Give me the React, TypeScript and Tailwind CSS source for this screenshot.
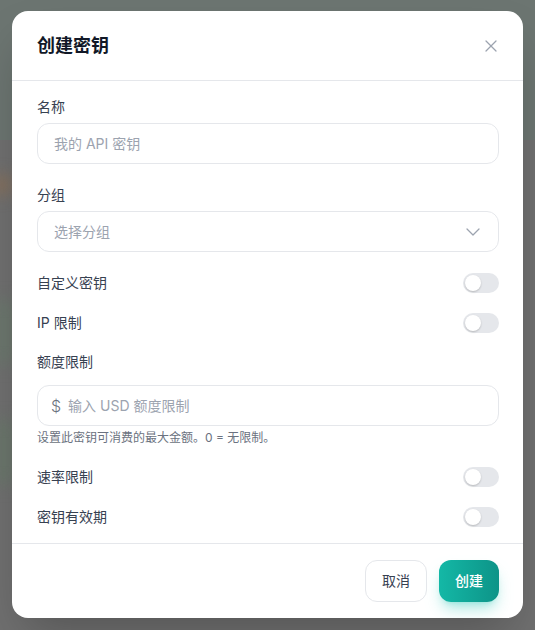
import { X, ChevronDown } from "lucide-react";

function Toggle() {
  return (
    <span className="relative inline-flex h-5 w-9 shrink-0 items-center rounded-full bg-[#e5e7eb]">
      <span className="ml-0.5 h-4 w-4 rounded-full bg-white shadow-[0_1px_2px_rgba(0,0,0,0.2)]" />
    </span>
  );
}

function ToggleRow({ label }: { label: string }) {
  return (
    <div className="flex h-5 items-center justify-between">
      <span className="text-sm text-[#374151]">{label}</span>
      <Toggle />
    </div>
  );
}

export default function App() {
  return (
    <div
      className="relative flex h-[630px] w-[535px] overflow-hidden bg-[#707070] px-3 pt-[11px]"
      style={{ fontFamily: 'Inter, "Noto Sans CJK SC", sans-serif' }}
    >
      {/* blurred page behind the dialog */}
      <div className="pointer-events-none absolute inset-0">
        <div className="absolute left-0 top-0 h-[140px] w-full bg-[#6c7571]" />
        <div className="absolute -left-2 top-[175px] h-5 w-5 rounded-full bg-[#8a7058] blur-sm" />
        <div className="absolute -left-2 top-[300px] h-16 w-6 bg-[#6b776d] blur-sm" />
        <div className="absolute -left-2 top-[420px] h-16 w-6 bg-[#6a766b] blur-sm" />
      </div>

      <div className="relative flex h-[607px] w-[511px] flex-col overflow-hidden rounded-2xl bg-white shadow-2xl">
        {/* header */}
        <div className="flex items-center justify-between border-b border-[#e5e7eb] pb-5 pl-[25px] pr-[22px] pt-[21px]">
          <h2 className="text-lg font-bold leading-7 text-[#111827]">创建密钥</h2>
          <X className="h-5 w-5 text-[#9ca3af]" strokeWidth={1.5} />
        </div>

        {/* body */}
        <div className="flex flex-col pb-4 pl-[25px] pr-6 pt-4">
          <label className="mb-1.5 text-sm leading-5 text-[#374151]">名称</label>
          <div className="flex h-[41px] items-center rounded-xl border border-[#e5e7eb] px-4 text-sm text-[#9ca3af]">
            我的 API 密钥
          </div>

          <label className="mb-1.5 mt-[21px] text-sm leading-5 text-[#374151]">分组</label>
          <div className="flex h-[41px] items-center justify-between rounded-xl border border-[#e5e7eb] pl-4 pr-[13px] text-sm text-[#9ca3af]">
            <span>选择分组</span>
            <ChevronDown className="h-6 w-6 text-[#9ca3af]" strokeWidth={1.25} />
          </div>

          <div className="mt-[21px] flex flex-col gap-5">
            <ToggleRow label="自定义密钥" />
            <ToggleRow label="IP 限制" />
          </div>

          <label className="mb-[13px] mt-[19px] text-sm leading-5 text-[#374151]">额度限制</label>
          <div className="flex h-[41px] items-center gap-[7px] rounded-xl border border-[#e5e7eb] pl-[13px] text-sm">
            <span className="text-base font-light text-[#6b7280]">$</span>
            <span className="text-[#9ca3af]">输入 USD 额度限制</span>
          </div>
          <p className="mt-1 text-xs leading-4 text-[#6b7280]">设置此密钥可消费的最大金额。0 = 无限制。</p>

          <div className="mt-[21px] flex flex-col gap-5">
            <ToggleRow label="速率限制" />
            <ToggleRow label="密钥有效期" />
          </div>
        </div>

        {/* footer */}
        <div className="flex justify-end gap-3 border-t border-[#e5e7eb] px-6 pt-4">
          <button className="h-[42px] w-[62px] rounded-xl border border-[#e5e7eb] bg-white text-sm text-[#374151]">
            取消
          </button>
          <button className="h-[42px] w-[60px] rounded-xl bg-gradient-to-r from-[#14b8a6] to-[#0d9488] text-sm font-medium text-white shadow-lg shadow-teal-500/30">
            创建
          </button>
        </div>
      </div>
    </div>
  );
}
